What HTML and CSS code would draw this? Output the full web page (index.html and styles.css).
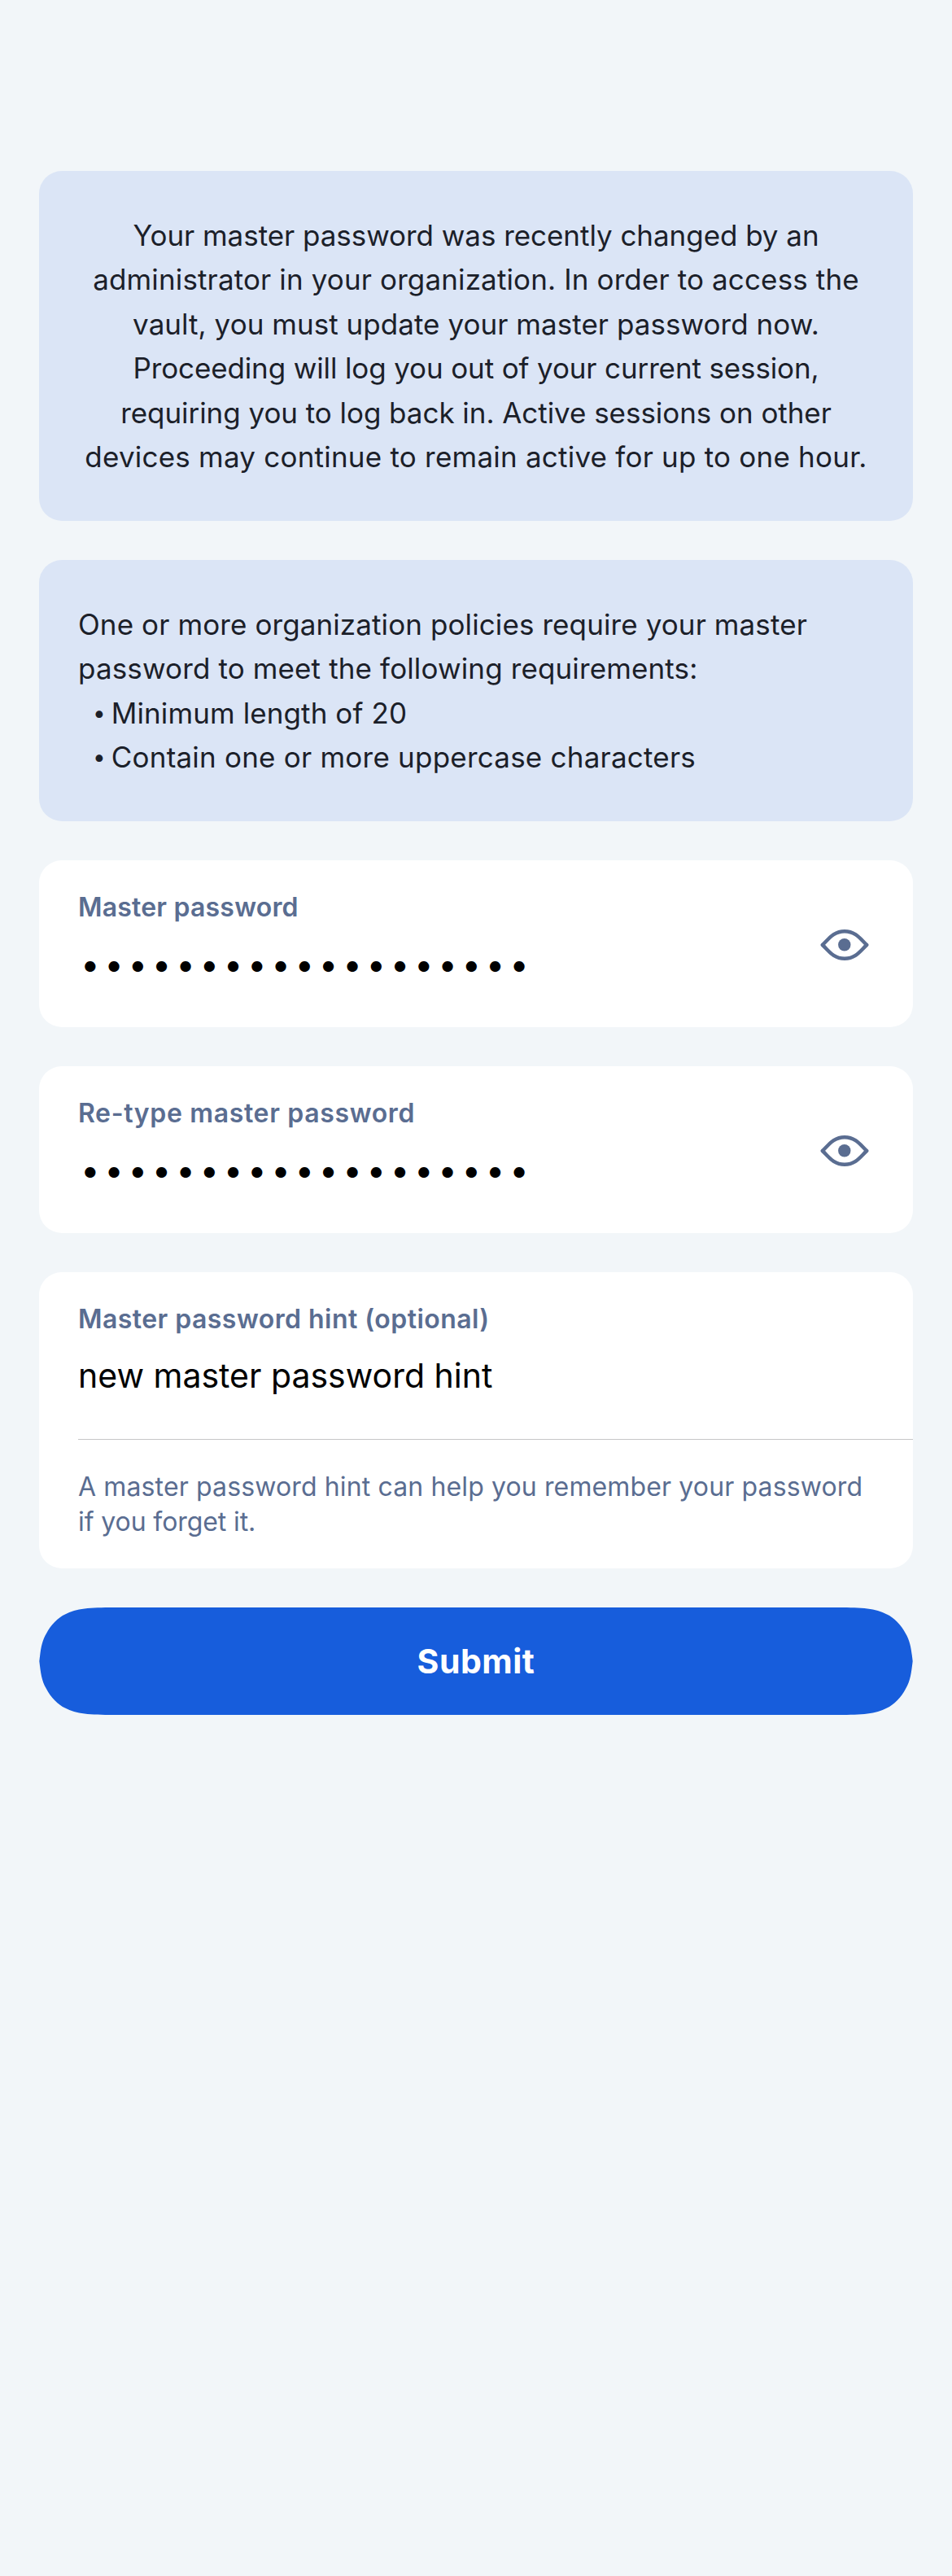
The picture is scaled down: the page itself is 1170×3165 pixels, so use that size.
FILE: index.html
```html
<!DOCTYPE html>
<html lang="en">
<head>
<meta charset="utf-8">
<title>Update master password</title>
<link rel="stylesheet" href="styles.css">
</head>
<body>
<main class="screen">
  <section class="notice notice-center">
    <p class="line t-a">Your master password was recently changed by an</p>
    <p class="line t-b">administrator in your organization. In order to access the</p>
    <p class="line t-c">vault, you must update your master password now.</p>
    <p class="line t-d">Proceeding will log you out of your current session,</p>
    <p class="line t-a">requiring you to log back in. Active sessions on other</p>
    <p class="line t-e">devices may continue to remain active for up to one hour.</p>
  </section>

  <section class="notice notice-policy">
    <p class="line t-f">One or more organization policies require your master</p>
    <p class="line t-b">password to meet the following requirements:</p>
    <ul class="rules">
      <li class="line rule"><span class="bullet">•</span><span class="t-f">Minimum length of 20</span></li>
      <li class="line rule"><span class="bullet">•</span><span class="t-e">Contain one or more uppercase characters</span></li>
    </ul>
  </section>

  <section class="card card-password">
    <div class="field">
      <div class="label">Master password</div>
      <div class="dots">•••••••••••••••••••</div>
    </div>
    <svg class="eye" viewBox="0 0 60 38" aria-hidden="true">
      <path d="M2.8 19C10 12.500 16 2.300 30 2.300S50 12.500 57.200 19C50 25.500 44 35.700 30 35.700S10 25.500 2.800 19Z"/>
      <circle cx="29.800" cy="18.700" r="7.700"/>
    </svg>
  </section>

  <section class="card card-password">
    <div class="field">
      <div class="label label-retype">Re-type master password</div>
      <div class="dots">•••••••••••••••••••</div>
    </div>
    <svg class="eye" viewBox="0 0 60 38" aria-hidden="true">
      <path d="M2.8 19C10 12.500 16 2.300 30 2.300S50 12.500 57.200 19C50 25.500 44 35.700 30 35.700S10 25.500 2.800 19Z"/>
      <circle cx="29.800" cy="18.700" r="7.700"/>
    </svg>
  </section>

  <section class="card card-hint">
    <div class="label label-hint">Master password hint (optional)</div>
    <div class="value">new master password hint</div>
    <div class="help">
      <p class="t-b">A master password hint can help you remember your password</p>
      <p class="t-g">if you forget it.</p>
    </div>
  </section>

  <button class="submit" type="button">Submit</button>
</main>
</body>
</html>
```

FILE: styles.css
```css
* { box-sizing: border-box; }

body {
  margin: 0;
  background: #f2f6f9;
  font-family: Inter, "Open Sans", sans-serif;
  color: #1b2029;
}

p, ul { margin: 0; padding: 0; list-style: none; }

.screen {
  display: flex;
  flex-direction: column;
  gap: 48px;
  min-height: 3165px;
  padding: 210px 48px 0;
}

.notice {
  background: #dbe5f6;
  border-radius: 28px;
  padding: 52px 48px 0;
  font-size: 35px;
}
.notice-center { height: 430px; text-align: center; }
.notice-policy { height: 321px; }

.line { line-height: 54.4px; white-space: nowrap; }
.rule { display: flex; gap: 7px; padding-left: 18px; }
.bullet { font-size: 28px; }

/* Tracking per line of copy */
.t-a { letter-spacing: -0.05px; }
.t-b { letter-spacing: 0.13px; }
.t-c { letter-spacing: 0.04px; }
.t-d { letter-spacing: -0.13px; }
.t-e { letter-spacing: 0.22px; }
.t-f { letter-spacing: 0.1px; }
.t-g { letter-spacing: -0.1px; }

.card {
  background: #fff;
  border-radius: 28px;
  padding: 38px 0 0 48px;
}
.card-password {
  display: flex;
  justify-content: space-between;
  height: 205px;
  padding-right: 54px;
}
.card-hint { height: 364px; }

.label {
  font-size: 32px;
  font-weight: 600;
  line-height: 40px;
  color: #5a6d91;
  letter-spacing: 0.2px;
}
.label-retype { letter-spacing: 0.65px; }
.label-hint { letter-spacing: 0.45px; }

.dots {
  margin-top: 20px;
  padding-left: 3px;
  font-size: 42px;
  line-height: 60px;
  letter-spacing: 5.66px;
  color: #000;
}

.eye {
  width: 60px;
  height: 38px;
  margin-top: 47px;
}
.eye path { fill: none; stroke: #5a6d91; stroke-width: 4.5; stroke-linejoin: round; }
.eye circle { fill: #5a6d91; }

.value {
  margin-top: 19px;
  padding-bottom: 48px;
  border-bottom: 1px solid #c6c6c8;
  font-size: 41px;
  line-height: 60px;
  color: #000;
}

.help {
  padding-top: 36px;
  font-size: 32px;
  line-height: 43px;
  color: #5a6d91;
  white-space: nowrap;
}

.submit {
  height: 132px;
  border: 0;
  padding: 0;
  background: #175ddc;
  color: #fff;
  font: 700 41px/132px Inter, "Open Sans", sans-serif;
  letter-spacing: 0.5px;
  clip-path: path("M0.300 66C2 52 3 42 9 32C14 22 24 12 32 8.500C46 1 62 0 92 0H982C1012 0 1028 1 1042 8.500C1050 12 1060 22 1065 32C1071 42 1072 52 1073.700 66C1072 80 1071 90 1065 100C1060 110 1050 120 1042 123.500C1028 131 1012 132 982 132H92C62 132 46 131 32 123.500C24 120 14 110 9 100C3 90 2 80 0.300 66Z");
}
```
